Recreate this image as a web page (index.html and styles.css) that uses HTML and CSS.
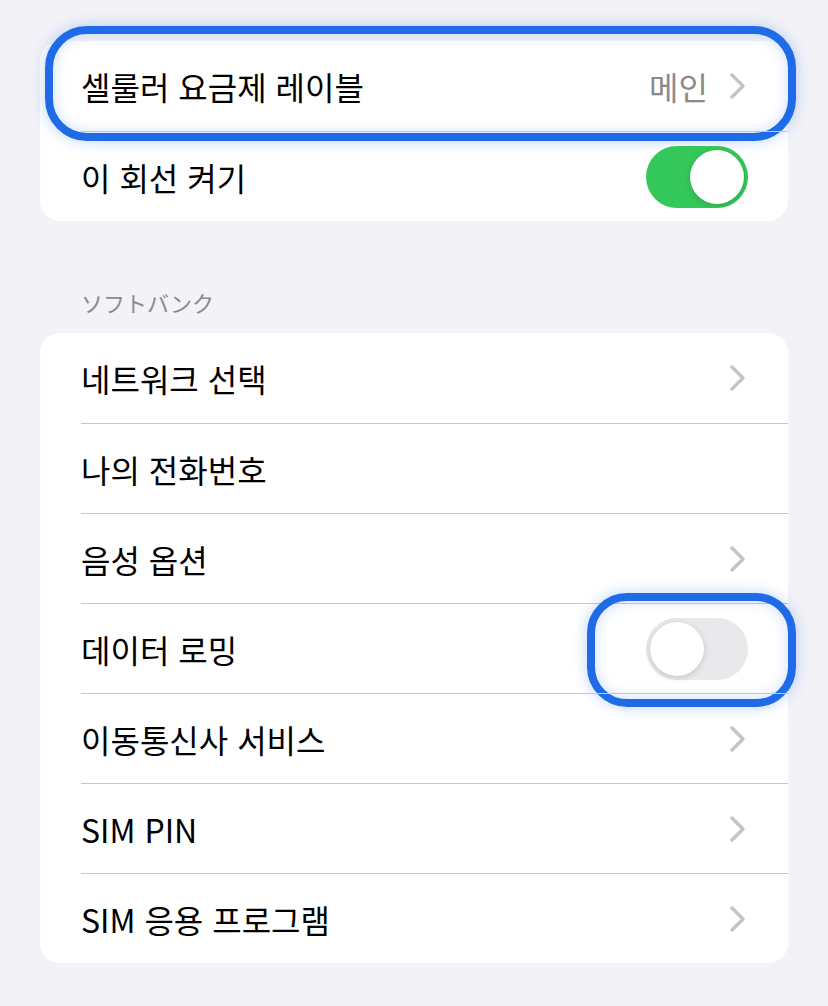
FILE: index.html
```html
<!DOCTYPE html>
<html lang="ko">
<head>
  <meta charset="UTF-8" />
  <meta name="viewport" content="width=device-width, initial-scale=1.0"/>
  <title>셀룰러</title>
  <link rel="stylesheet" href="styles.css">
</head>
<body>

  <div class="group first">
    <div class="row">
      <span class="label">셀룰러 요금제 레이블</span>
      <span class="value">메인</span>
      <svg class="chevron" viewBox="0 0 16 26"><polyline points="2,2 13,13 2,24"/></svg>
      <div class="focus focus-wide"></div>
    </div>
    <div class="row">
      <span class="label">이 회선 켜기</span>
      <div class="switch on"><div class="knob"></div></div>
    </div>
  </div>

  <div class="group-title">ソフトバンク</div>

  <div class="group">
    <div class="row">
      <span class="label">네트워크 선택</span>
      <svg class="chevron" viewBox="0 0 16 26"><polyline points="2,2 13,13 2,24"/></svg>
    </div>
    <div class="row">
      <span class="label">나의 전화번호</span>
    </div>
    <div class="row">
      <span class="label">음성 옵션</span>
      <svg class="chevron" viewBox="0 0 16 26"><polyline points="2,2 13,13 2,24"/></svg>
    </div>
    <div class="row">
      <span class="label">데이터 로밍</span>
      <div class="switch"><div class="knob"></div></div>
      <div class="focus focus-switch"></div>
    </div>
    <div class="row">
      <span class="label">이동통신사 서비스</span>
      <svg class="chevron" viewBox="0 0 16 26"><polyline points="2,2 13,13 2,24"/></svg>
    </div>
    <div class="row">
      <span class="label">SIM PIN</span>
      <svg class="chevron" viewBox="0 0 16 26"><polyline points="2,2 13,13 2,24"/></svg>
    </div>
    <div class="row">
      <span class="label">SIM 응용 프로그램</span>
      <svg class="chevron" viewBox="0 0 16 26"><polyline points="2,2 13,13 2,24"/></svg>
    </div>
  </div>

</body>
</html>
```

FILE: styles.css
```css
body {
  margin: 0;
  padding: 41px 40px 0;
  background-color: #f2f2f7;
  font-family: "Noto Sans CJK KR", "Noto Sans", sans-serif;
  color: #000;
}
.group {
  background: #fff;
  border-radius: 20px;
}
.row {
  position: relative;
  display: flex;
  align-items: center;
  height: 90px;
  box-sizing: border-box;
  margin-left: 41px;
  padding-right: 42px;
  border-top: 1px solid #c8c8ca;
}
.row:first-child {
  border-top: none;
}
.label {
  flex: 1;
  font-size: 32px;
  line-height: 1;
}
.value {
  font-size: 32px;
  line-height: 1;
  color: #8a8a8e;
  margin-right: 22px;
}
.chevron {
  width: 16px;
  height: 26px;
  fill: none;
  stroke: #c4c4c7;
  stroke-width: 3.4;
  stroke-linecap: round;
  stroke-linejoin: round;
}
.group-title {
  padding: 69px 0 18px 41px;
  font-family: "Noto Sans CJK JP", sans-serif;
  font-size: 22px;
  line-height: 25px;
  color: #8a8a8e;
}
.switch {
  position: relative;
  width: 102px;
  height: 62px;
  margin-right: -2px;
  border-radius: 31px;
  background: #e9e9eb;
}
.switch.on {
  background: #34c759;
}
.knob {
  position: absolute;
  top: 4px;
  left: 4px;
  width: 54px;
  height: 54px;
  border-radius: 50%;
  background: #fff;
  box-shadow: 0 2px 6px rgba(0,0,0,0.15), 0 0 1px rgba(0,0,0,0.1);
}
.switch.on .knob {
  left: auto;
  right: 4px;
}
.focus {
  position: absolute;
  border: 8px solid #1f6ae6;
  box-sizing: border-box;
  box-shadow: 0 0 14px rgba(31,106,230,0.3), inset 0 0 14px rgba(31,106,230,0.22);
  pointer-events: none;
}
.focus-wide {
  left: -36px;
  right: -8px;
  top: -15px;
  height: 115px;
  border-radius: 42px;
}
.focus-switch {
  right: -8px;
  top: -11px;
  width: 209px;
  height: 114px;
  border-radius: 40px;
}
```
